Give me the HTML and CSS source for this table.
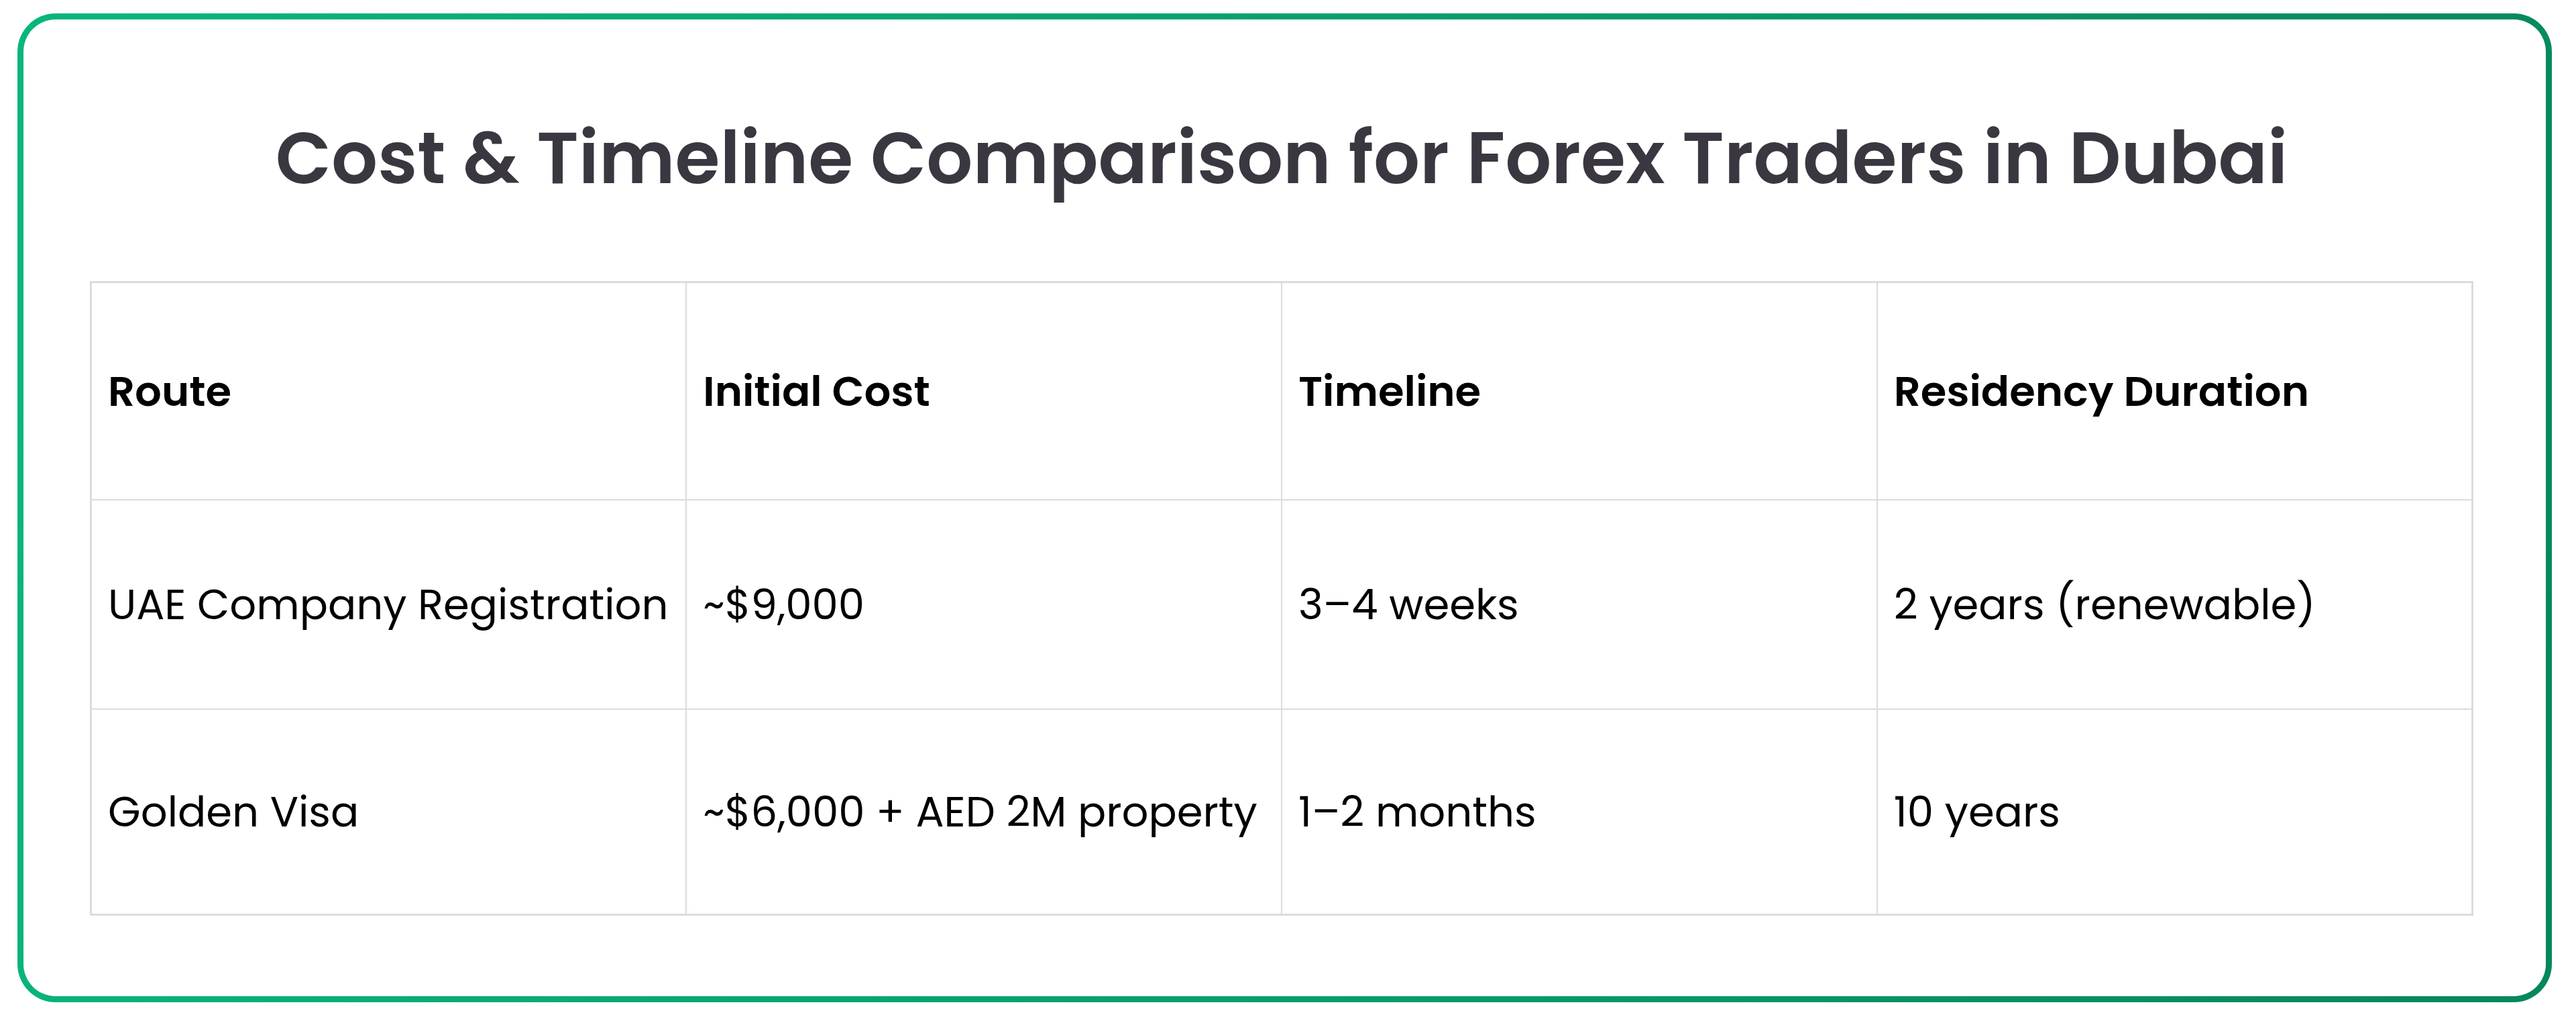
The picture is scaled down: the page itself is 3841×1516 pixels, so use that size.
FILE: index.html
```html
<!DOCTYPE html>
<html lang="en">
<head>
<meta charset="utf-8">
<title>Cost &amp; Timeline Comparison for Forex Traders in Dubai</title>
<link rel="stylesheet" href="styles.css">
</head>
<body>
<section class="card">
  <h1 class="title">Cost &amp; Timeline Comparison for Forex Traders in Dubai</h1>
  <table class="grid">
    <thead>
      <tr class="head-row">
        <th>Route</th>
        <th>Initial Cost</th>
        <th>Timeline</th>
        <th>Residency Duration</th>
      </tr>
    </thead>
    <tbody>
      <tr class="row-a">
        <td>UAE Company Registration</td>
        <td>~$9,000</td>
        <td>3–4 weeks</td>
        <td>2 years (renewable)</td>
      </tr>
      <tr class="row-b">
        <td>Golden Visa</td>
        <td>~$6,000 + AED 2M property</td>
        <td>1–2 months</td>
        <td>10 years</td>
      </tr>
    </tbody>
  </table>
</section>
</body>
</html>
```

FILE: styles.css
```css
html, body {
  margin: 0;
  padding: 0;
  background: #ffffff;
}
body {
  padding: 20px 36px 22px 26px;
  font-family: "Poppins", "Inter", "Noto Sans", sans-serif;
}
.card {
  box-sizing: border-box;
  height: 1474px;
  border: 9px solid transparent;
  border-radius: 57px;
  background:
    linear-gradient(#ffffff, #ffffff) padding-box,
    linear-gradient(100deg, #08b67b 0%, #06a06b 50%, #05875a 100%) border-box;
  padding: 140px 108px 0 99px;
}
.title {
  margin: 0 0 118px;
  text-align: center;
  font-size: 108.4px;
  line-height: 132px;
  font-weight: 600;
  color: #3b3740;
}
.grid {
  width: 100%;
  table-layout: fixed;
  border-collapse: collapse;
  border: 3px solid #dcdcdc;
}
.grid th,
.grid td {
  border: 2px solid #dcdcdc;
  padding: 0 24px;
  text-align: left;
  vertical-align: middle;
  font-size: 62.5px;
  color: #000000;
  white-space: nowrap;
}
.grid th {
  font-weight: 600;
}
.grid td {
  font-weight: 400;
}
.head-row { height: 324px; }
.row-a { height: 312px; }
.row-b { height: 307px; }
```
